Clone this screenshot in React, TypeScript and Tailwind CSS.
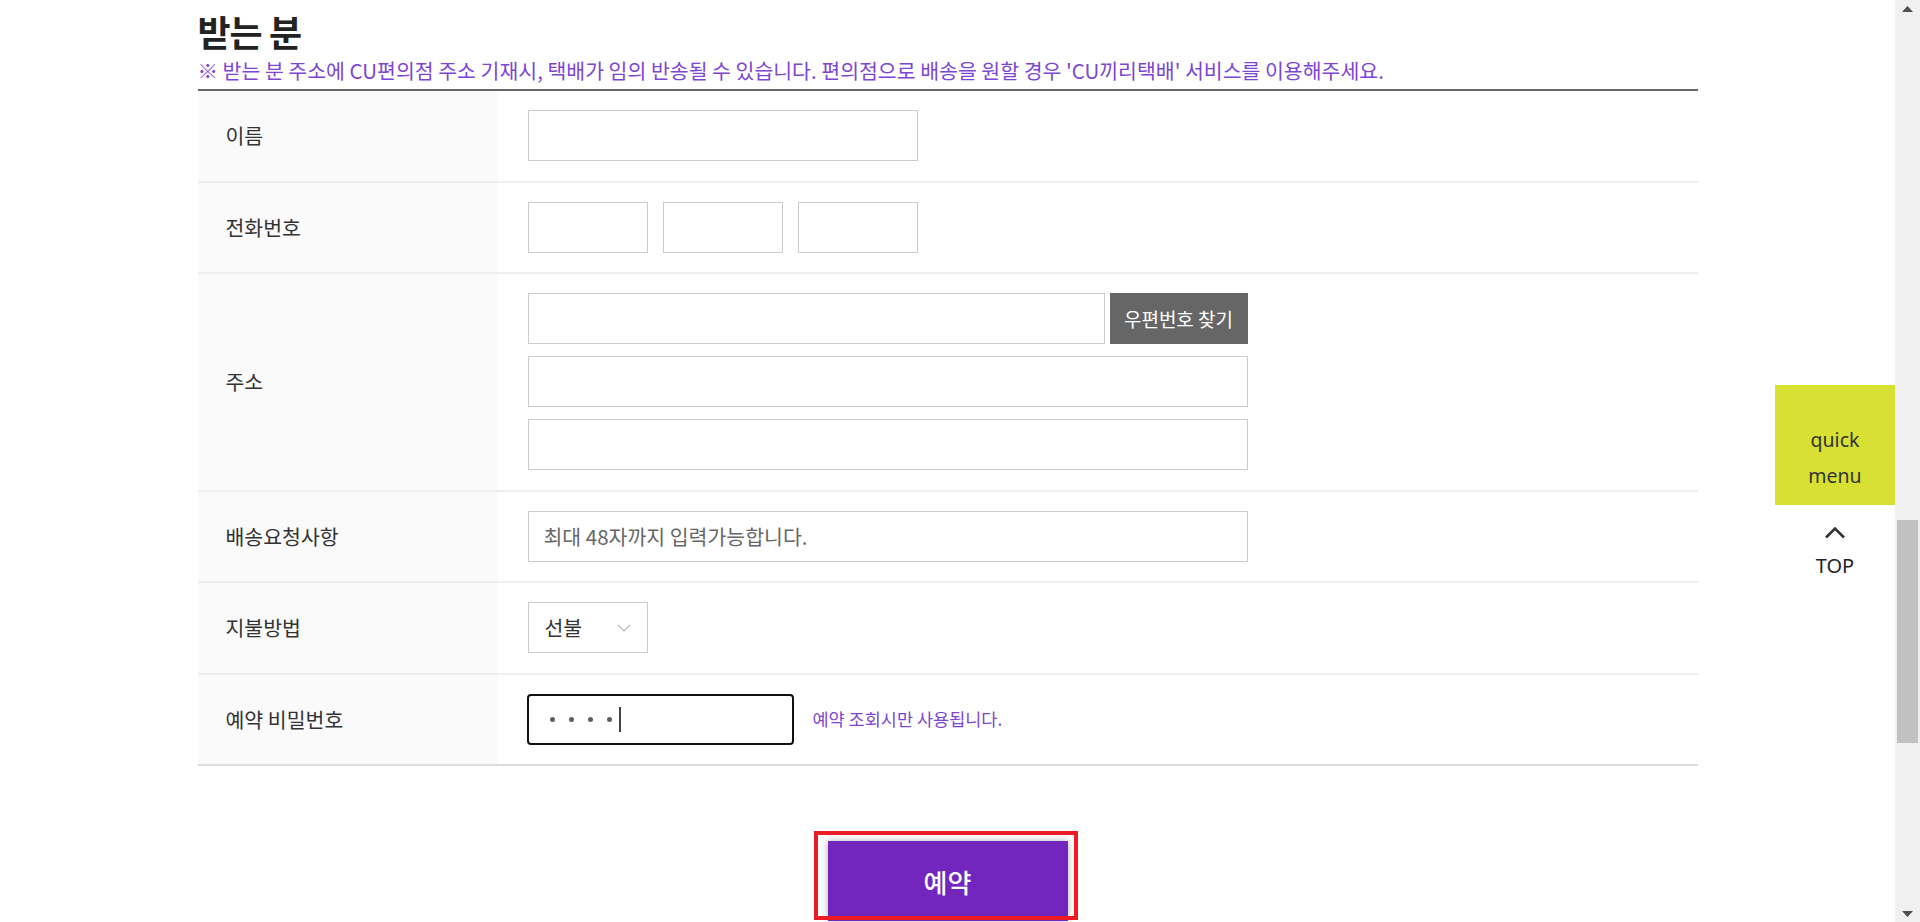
import React from "react";

const inputCls =
  "block h-[51px] border border-[#cccccc] bg-white px-[15px] text-[20.5px] text-[#333] outline-none placeholder:text-[#666]";

function Row({
  label,
  children,
  last,
}: {
  label: string;
  children: React.ReactNode;
  last?: boolean;
}) {
  return (
    <div
      className={
        "flex border-b-2 " + (last ? "border-[#dddddd]" : "border-[#eeeeee]")
      }
    >
      <div className="flex w-[300px] shrink-0 items-center bg-[#fafafa] pl-[28px] text-[20.5px] text-[#333]">
        {label}
      </div>
      <div className="flex-1 py-[19.25px] pl-[30px]">{children}</div>
    </div>
  );
}

function Scrollbar() {
  return (
    <div className="flex h-full w-[25px] shrink-0 flex-col bg-[#f0f0f0]">
      <div className="flex h-[17px] items-center justify-center">
        <svg width="11" height="6" viewBox="0 0 11 6">
          <polygon points="5.5,0 11,6 0,6" fill="#505050" />
        </svg>
      </div>
      <div className="mx-[2px] mt-[503px] h-[223px] bg-[#c1c1c1]" />
      <div className="flex-1" />
      <div className="flex h-[17px] items-center justify-center">
        <svg width="11" height="6" viewBox="0 0 11 6">
          <polygon points="0,0 11,0 5.5,6" fill="#505050" />
        </svg>
      </div>
    </div>
  );
}

function QuickMenu() {
  return (
    <div className="absolute right-[25px] top-[385px] flex w-[120px] flex-col items-center font-['Noto_Sans',sans-serif]">
      <div className="h-[120px] w-[120px] bg-[#d7e033] pt-[37px] text-center text-[19.5px] leading-[36px] text-[#333]">
        <div>quick</div>
        <div>menu</div>
      </div>
      <svg
        className="mt-[21px] block"
        width="22"
        height="13"
        viewBox="0 0 22 13"
      >
        <polyline
          points="2,11.5 11,2.5 20,11.5"
          fill="none"
          stroke="#333"
          strokeWidth="2.6"
        />
      </svg>
      <div className="mt-[15px] text-[20px] leading-[24px] text-[#222]">
        TOP
      </div>
    </div>
  );
}

export default function App() {
  return (
    <div className="relative flex h-screen w-full overflow-hidden bg-white font-['Noto_Sans_CJK_KR','Noto_Sans',sans-serif]">
      <div className="min-w-0 flex-1">
        <div className="mx-auto w-[1500px] pt-[10px]">
          <h2 className="text-[36px] font-bold leading-[42px] tracking-[-1px] text-[#222]">
            받는 분
          </h2>
          <p className="mt-[6px] text-[20.5px] leading-[24px] text-[#7d45d2]">
            ※ 받는 분 주소에 CU편의점 주소 기재시, 택배가 임의 반송될 수
            있습니다. 편의점으로 배송을 원할 경우 'CU끼리택배' 서비스를
            이용해주세요.
          </p>

          <div className="mt-[7px] border-t-2 border-[#666666]">
            <Row label="이름">
              <input className={inputCls + " w-[390px]"} readOnly />
            </Row>
            <Row label="전화번호">
              <div className="flex gap-[15px]">
                <input className={inputCls + " w-[120px]"} readOnly />
                <input className={inputCls + " w-[120px]"} readOnly />
                <input className={inputCls + " w-[120px]"} readOnly />
              </div>
            </Row>
            <Row label="주소">
              <div className="flex w-[720px] flex-col gap-[12px]">
                <div className="flex gap-[5px]">
                  <input className={inputCls + " w-[577px]"} readOnly />
                  <button className="flex h-[51px] flex-1 items-center justify-center bg-[#666666] text-[19px] text-white">
                    우편번호 찾기
                  </button>
                </div>
                <input className={inputCls + " w-[720px]"} readOnly />
                <input className={inputCls + " w-[720px]"} readOnly />
              </div>
            </Row>
            <Row label="배송요청사항">
              <input
                className={inputCls + " w-[720px]"}
                placeholder="최대 48자까지 입력가능합니다."
                readOnly
              />
            </Row>
            <Row label="지불방법">
              <div className="flex h-[51px] w-[120px] items-center justify-between border border-[#cccccc] bg-white pl-[16px] pr-[16px] text-[20.5px] text-[#333]">
                <span>선불</span>
                <svg width="14" height="8" viewBox="0 0 14 8">
                  <polyline
                    points="1,1 7,7 13,1"
                    fill="none"
                    stroke="#bbbbbb"
                    strokeWidth="1.2"
                  />
                </svg>
              </div>
            </Row>
            <Row label="예약 비밀번호" last>
              <div className="flex items-center">
                <div className="ml-[-1px] flex h-[51px] w-[267px] items-center rounded-[4px] border-2 border-[#111111] bg-white pl-[21px]">
                  <span className="h-[5px] w-[5px] rounded-full bg-[#5a5f66]" />
                  <span className="ml-[14px] h-[5px] w-[5px] rounded-full bg-[#5a5f66]" />
                  <span className="ml-[14px] h-[5px] w-[5px] rounded-full bg-[#5a5f66]" />
                  <span className="ml-[14px] h-[5px] w-[5px] rounded-full bg-[#5a5f66]" />
                  <span className="ml-[7px] h-[25px] w-[2px] bg-[#444]" />
                </div>
                <span className="ml-[19px] text-[17.5px] text-[#7d45d2]">
                  예약 조회시만 사용됩니다.
                </span>
              </div>
            </Row>
          </div>

          <div className="mt-[75px] flex justify-center">
            <div className="relative">
              <button className="flex h-[80px] w-[240px] items-center justify-center bg-[#7226be] text-[26px] font-medium text-white shadow-[0_0_8px_rgba(0,0,0,0.3)]">
                예약
              </button>
              <div className="pointer-events-none absolute left-[-14px] top-[-10px] h-[89px] w-[264px] border-4 border-[#ed1c24]" />
            </div>
          </div>
        </div>
      </div>
      <Scrollbar />
      <QuickMenu />
    </div>
  );
}
